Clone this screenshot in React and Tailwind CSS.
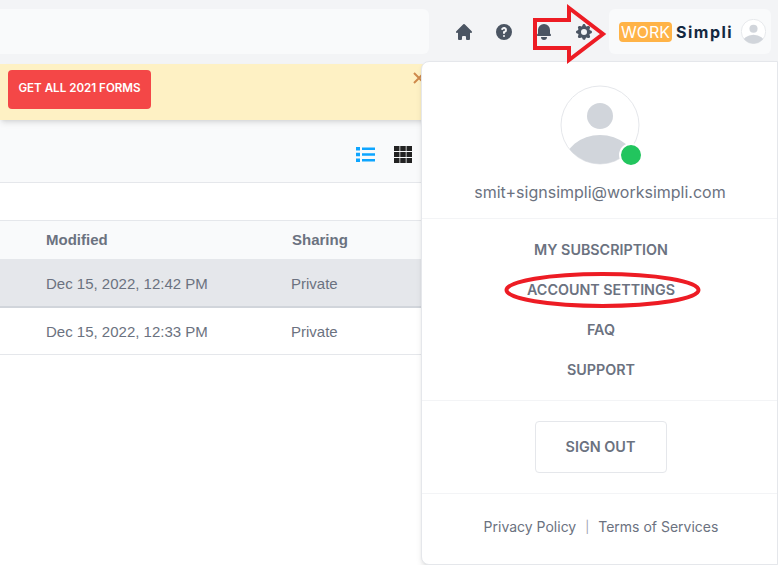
import React from 'react';
import { HiHome, HiQuestionMarkCircle, HiBell, HiCog } from 'react-icons/hi';

const poppins = 'font-["Inter","Noto_Sans",sans-serif]';

function UserGlyph({ className, stroke = 1 }) {
  return (
    <svg viewBox="0 0 80 80" className={className}>
      <defs>
        <clipPath id="avatar-clip">
          <circle cx="40" cy="40" r="39" />
        </clipPath>
      </defs>
      <circle cx="40" cy="40" r="39" fill="#fff" stroke="#e5e7eb" strokeWidth={stroke} />
      <g clipPath="url(#avatar-clip)">
        <circle cx="40" cy="31" r="13" fill="#d1d5db" />
        <ellipse cx="40" cy="80" rx="36" ry="30" fill="#d1d5db" />
      </g>
    </svg>
  );
}

function ListIcon() {
  return (
    <svg width="19" height="15" viewBox="0 0 19 15" fill="#0ea5ff">
      <rect x="0" y="0" width="4" height="3.5" />
      <rect x="0" y="5.75" width="4" height="3.5" />
      <rect x="0" y="11.5" width="4" height="3.5" />
      <rect x="6" y="0.5" width="13" height="2.5" />
      <rect x="6" y="6.25" width="13" height="2.5" />
      <rect x="6" y="12" width="13" height="2.5" />
    </svg>
  );
}

function GridIcon() {
  return (
    <svg width="18" height="17" viewBox="0 0 18 17" fill="#222">
      {[0, 6.25, 12.5].map((x) =>
        [0, 6, 12].map((y) => <rect key={`${x}-${y}`} x={x} y={y} width="5.5" height="5" />)
      )}
    </svg>
  );
}

function Row({ date, selected }) {
  return (
    <div
      className={`flex items-center pl-[46px] text-[15px] text-[#6b7280] ${
        selected
          ? 'h-[48px] pt-[3px] bg-[#e5e7eb] border-b-2 border-[#d1d5db]'
          : 'h-[47px] pt-[2px] bg-white border-b border-[#e5e7eb]'
      }`}
    >
      <span className="w-[245px]">{date}</span>
      <span>Private</span>
    </div>
  );
}

function ProfileMenu() {
  const links = ['MY SUBSCRIPTION', 'ACCOUNT SETTINGS', 'FAQ', 'SUPPORT'];
  return (
    <div
      className={`absolute left-[421px] top-[61px] w-[357px] h-[504px] bg-white border border-[#e5e7eb] rounded-l-lg shadow-md flex flex-col ${poppins}`}
    >
      <div className="flex flex-col items-center h-[157px] pt-[23px] pl-[1px] border-b border-[#f3f4f6]">
        <div className="relative w-[80px] h-[80px]">
          <UserGlyph className="w-[80px] h-[80px]" />
          <span className="absolute right-[-3px] bottom-[-2px] w-[24px] h-[24px] rounded-full bg-[#22c55e] border-[2px] border-white" />
        </div>
        <p className="mt-[17px] text-[16px] leading-[20px] text-[#6b7280]">smit+signsimpli@worksimpli.com</p>
      </div>
      <div className="flex flex-col items-center h-[182px] pt-[11px] pl-[3px] border-b border-[#f3f4f6]">
        {links.map((link) => (
          <a key={link} className="h-[40px] flex items-center text-[14.3px] font-semibold text-[#6b7280]">
            {link}
          </a>
        ))}
      </div>
      <div className="flex items-center justify-center h-[93px] pl-[2px] border-b border-[#f3f4f6]">
        <button className="w-[132px] h-[52px] rounded border border-[#e5e7eb] text-[14.4px] font-semibold text-[#6b7280]">
          SIGN OUT
        </button>
      </div>
      <div className="flex flex-1 items-start justify-center pt-[23px] pl-[3px] text-[14px] leading-[20px] text-[#6b7280]">
        <span>Privacy Policy</span>
        <span className="mx-[9px] text-[12px] text-[#9ca3af]">|</span>
        <span>Terms of Services</span>
      </div>
    </div>
  );
}

export default function App() {
  return (
    <div className="relative w-[778px] h-[565px] overflow-hidden bg-white font-['Liberation_Sans',sans-serif]">
      <header className="flex items-center h-[64px] bg-[#f3f4f6] pb-[1px]">
        <div className="w-[429px] h-[45px] bg-[#f9fafb] rounded-r-md" />
        <nav className="flex items-center text-[#4b5563] ml-[25px] gap-[20px]">
          <HiHome size={20} />
          <HiQuestionMarkCircle size={20} />
          <HiBell size={20} />
          <HiCog size={20} />
        </nav>
        <div className="flex items-center w-[162px] h-[45px] ml-[15px] bg-[#f9fafb] rounded-md pl-[10px]">
          <span className={`flex items-center justify-center w-[53px] h-[20px] bg-[#ffb347] rounded-sm text-white text-[16px] ${poppins}`}>
            WORK
          </span>
          <span className={`ml-[4px] text-[#14283f] text-[16px] font-bold tracking-[1.5px] ${poppins}`}>Simpli</span>
          <UserGlyph className="w-[25px] h-[25px] ml-auto mr-[5px]" stroke={3} />
        </div>
      </header>

      <div className="flex items-start h-[56px] bg-[#fef1c4] shadow-md relative">
        <button className={`mt-[6px] ml-[8px] w-[143px] h-[39px] pb-[1px] bg-[#f44747] rounded-sm text-white text-[11.6px] font-semibold ${poppins}`}>
          GET ALL 2021 FORMS
        </button>
        <svg width="12" height="12" viewBox="0 0 12 12" className="ml-auto mr-[353px] mt-[8px]" stroke="#cf8a4c" strokeWidth="2" fill="none">
          <path d="M1 1 L11 11 M11 1 L1 11" />
        </svg>
      </div>

      <div className="flex items-center justify-end gap-[19px] h-[63px] pt-[6px] pr-[366px] bg-[#f9fafb] border-b border-[#e5e7eb]">
        <ListIcon />
        <GridIcon />
      </div>

      <div className="h-[38px] bg-white border-b border-[#e5e7eb]" />

      <div className="flex items-center h-[39px] pl-[46px] bg-[#f9fafb] border-b border-[#e5e7eb] text-[15px] font-bold text-[#6b7280]">
        <span className="w-[246px]">Modified</span>
        <span>Sharing</span>
      </div>
      <Row date="Dec 15, 2022, 12:42 PM" selected />
      <Row date="Dec 15, 2022, 12:33 PM" />

      <ProfileMenu />

      <svg width="778" height="565" className="absolute inset-0 pointer-events-none" fill="none" stroke="#ed1c24" strokeWidth="4">
        <polygon points="535,20 569,20 569,8 603,34 569,60 569,48 535,48" />
        <ellipse cx="602.5" cy="290" rx="96" ry="16" />
      </svg>
    </div>
  );
}
